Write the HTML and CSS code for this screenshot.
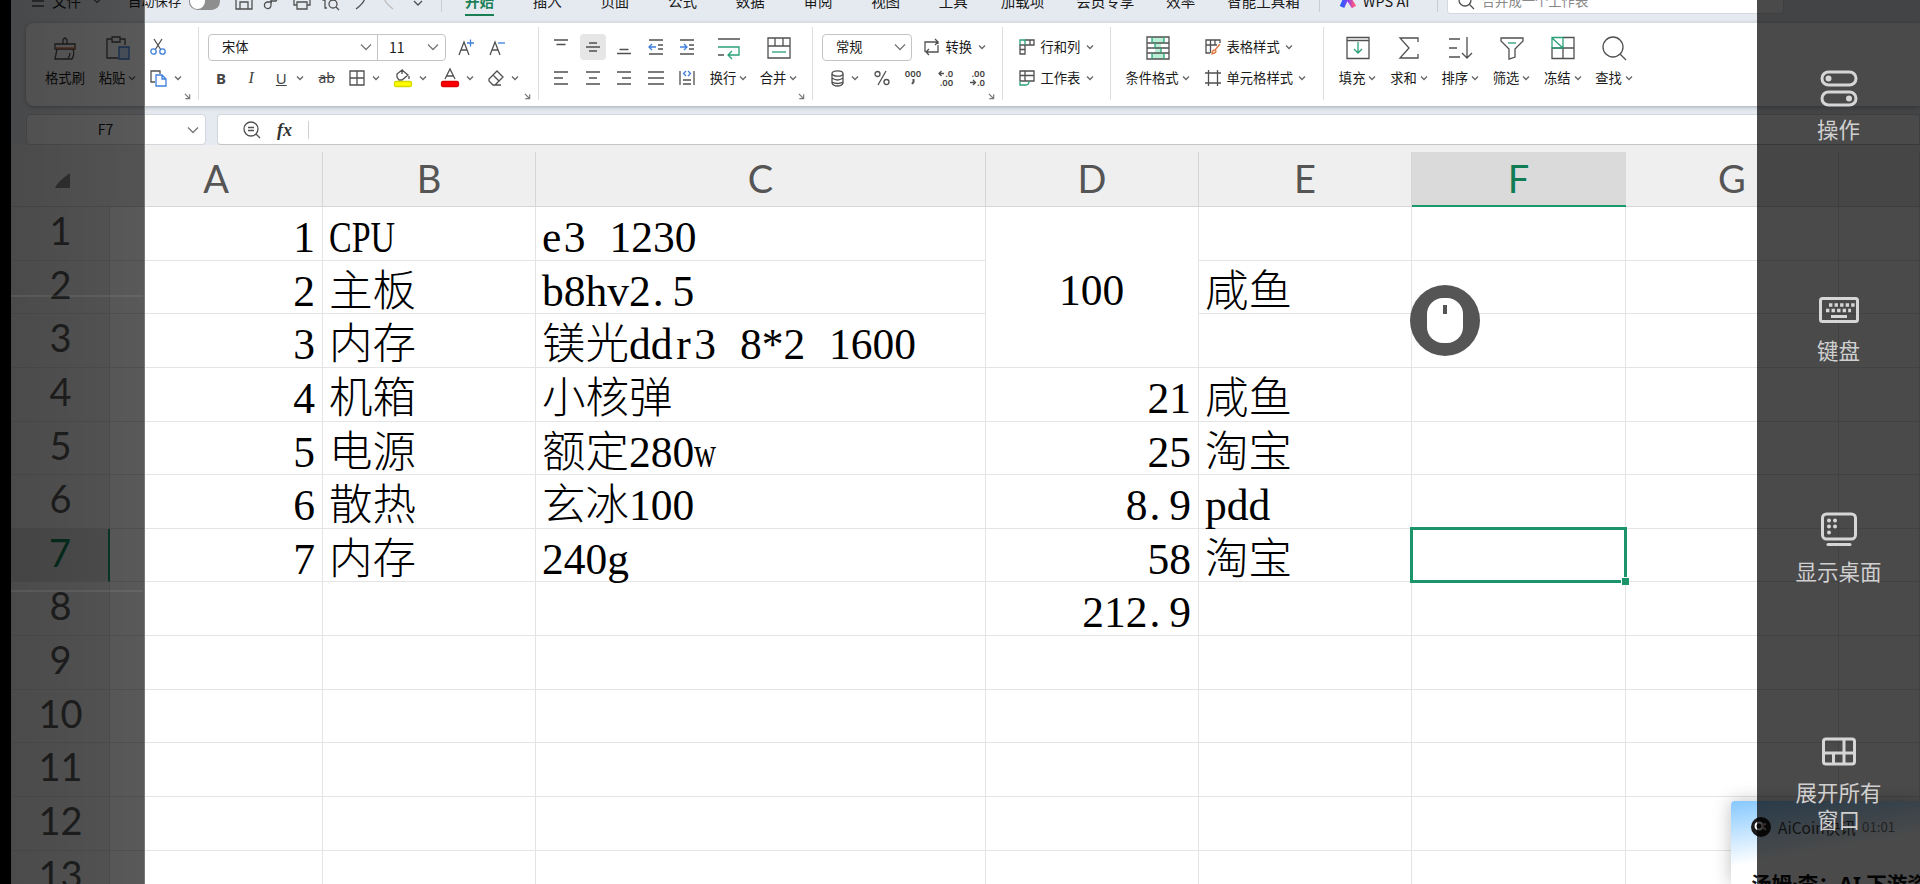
FILE: index.html
```html
<!DOCTYPE html>
<html lang="zh-CN">
<head>
    <meta charset="UTF-8">
    <meta name="viewport" content="width=device-width, initial-scale=1.0">
    <title>WPS 表格</title>
    <link rel="stylesheet" href="styles.css">
</head>
<body>
    <!-- shared icons -->
    <svg class="defs">
        <symbol id="chev" viewBox="0 0 8 8"><path d="M1 2.5 4 5.5 7 2.5"/></symbol>
        <symbol id="chev-big" viewBox="0 0 12 8"><path d="M1 1.5 6 6.5 11 1.5"/></symbol>
        <symbol id="launch" viewBox="0 0 8 8"><path d="M1 1 6 6M6.5 1.5V6.5H1.5"/></symbol>
    </svg>

    <div class="app">
        <div class="menubar">
            <span class="file"><svg width="12" height="14"><path d="M0 1H12M0 7H12M0 12H12"/></svg>文件<svg class="chev"><use href="#chev"/></svg></span>
            <span class="autosave">自动保存<i class="toggle"></i></span>
            <div class="quick">
                <svg width="18" height="18"><path d="M1 1H13L17 5V17H1ZM5 17V10H13V17"/></svg>
                <svg width="18" height="18"><path d="M8 10H4A3.300 3.300 0 1 0 7 13V4A3 3 0 1 1 12 9H7"/></svg>
                <svg width="18" height="18"><path d="M4 6V1H14V6M4 13H1V6H17V13H14M4 10H14V17H4Z"/></svg>
                <svg width="18" height="18"><path d="M5 16H3V8H1V3H14V7"/><circle cx="11" cy="12" r="4"/><path d="M14 15 17 18"/></svg>
                <svg width="18" height="18"><path d="M8 1C15 3 17 8 5 17"/></svg>
                <svg width="18" height="18" class="faint"><path d="M8 1C3 6 3 9 13 17"/></svg>
                <svg width="18" height="18"><path d="M5 9 9 13 13 9"/></svg>
            </div>
            <i class="bar"></i>
            <div class="tabs"><b>开始</b><span>插入</span><span>页面</span><span>公式</span><span>数据</span><span>审阅</span><span>视图</span><span>工具</span></div>
            <div class="tabs wide"><span>加载项</span><span>会员专享</span><span>效率</span><span>智能工具箱</span></div>
            <i class="bar"></i>
            <span class="ai"><svg width="18" height="18" viewBox="0 0 18 18"><defs><linearGradient id="aig"><stop offset="0" stop-color="#2a5cff"/><stop offset=".5" stop-color="#8d3df0"/><stop offset="1" stop-color="#ff5b7d"/></linearGradient></defs><path d="M2 15 7 4 14 15" stroke="url(#aig)" stroke-width="5" stroke-linejoin="round"/></svg>WPS AI</span>
            <i class="bar"></i>
            <div class="search"><svg width="18" height="18"><circle cx="8" cy="8" r="6"/><path d="M12 12 17 17"/></svg>合并成一个工作表</div>
        </div>

        <div class="ribbon">
            <div class="group clip">
                <div class="big w-brush"><svg width="24" height="24"><path d="M10 8V4Q12 0 14 4V8M2 8H22V13H2ZM4 13 2 23H19Q22 18 20 13M15 22Q17 20 17 17"/><path class="orange" d="M2 12H22"/></svg><span>格式刷</span></div>
                <div class="big w-paste"><svg width="24" height="24"><path d="M6 3H1V22H12M14 3H19V9M6 1H14V6H6Z"/><path class="blue tint" d="M13 11H23V23H13Z"/></svg><span>粘贴<svg class="chev"><use href="#chev"/></svg></span></div>
                <div class="rows cutcopy">
                    <div class="row"><svg width="16" height="16"><path d="M4 0 11 11M12 0 5 11"/><g class="blue"><circle cx="3.500" cy="12.500" r="2.700"/><circle cx="12.500" cy="12.500" r="2.700"/></g></svg></div>
                    <div class="row"><span class="pair"><svg width="17" height="17"><path d="M5 12H1V1H10V4"/><path class="blue" d="M6 5H12L16 9V16H6ZM12 5V9H16"/></svg><svg class="chev"><use href="#chev"/></svg></span></div>
                </div>
                <svg class="launch"><use href="#launch"/></svg>
            </div>

            <div class="group font">
                <div class="rows">
                    <div class="row">
                        <div class="combo"><span class="name">宋体<svg class="chevb"><use href="#chev-big"/></svg></span><span class="size">11<svg class="chevb"><use href="#chev-big"/></svg></span></div>
                        <svg class="aplus" width="17" height="17"><path d="M1 16 6 3 11 16M3 11H9"/><path class="blue" d="M9 4H16M12.500 .5V7.500"/></svg>
                        <svg class="aminus" width="17" height="17"><path d="M1 16 6 3 11 16M3 11H9"/><path class="blue" d="M9 4H16"/></svg>
                    </div>
                    <div class="row spread">
                        <span class="ltr bold">B</span>
                        <span class="ltr ital">I</span>
                        <span class="pair"><span class="ltr under">U</span><svg class="chev"><use href="#chev"/></svg></span>
                        <span class="ltr strike">ab</span>
                        <span class="pair"><svg width="16" height="16"><path d="M1 1H15V15H1ZM8 1V15M1 8H15"/></svg><svg class="chev"><use href="#chev"/></svg></span>
                        <span class="pair"><svg width="18" height="18"><path d="M8 1 14 6 8 11H5L3 8V5L8 1V5M15 7V10"/><rect class="yellow" x=".5" y="12.500" width="17" height="5" rx="1.500"/></svg><svg class="chev"><use href="#chev"/></svg></span>
                        <span class="pair"><svg width="18" height="18"><path d="M4 10 9 0 14 10M6 7H12"/><rect class="red" x=".5" y="12.500" width="17" height="5" rx="1.500"/></svg><svg class="chev"><use href="#chev"/></svg></span>
                        <span class="pair"><svg width="16" height="16"><path d="M9 1 15 7 7 15H5L1 11V9ZM5 5 11 11M5 15H13"/></svg><svg class="chev"><use href="#chev"/></svg></span>
                    </div>
                </div>
                <svg class="launch"><use href="#launch"/></svg>
            </div>

            <div class="group align">
                <div class="rows five">
                    <div class="row spread">
                        <svg width="16" height="16"><path d="M1 1H15M3.500 5.500H12.500"/></svg>
                        <span class="on"><svg width="16" height="16"><path d="M4 4H12M1 8H15M4 12H12"/></svg></span>
                        <svg width="16" height="16"><path d="M3.500 10.500H12.500M1 14.500H15"/></svg>
                        <svg width="16" height="16"><path d="M1 1H15M10 6H15M10 10H15M1 15H15"/><path class="blue" d="M1 8H8M4 5 1 8 4 11"/></svg>
                        <svg width="16" height="16"><path d="M1 1H15M10 6H15M10 10H15M1 15H15"/><path class="blue" d="M1 8H8M5 5 8 8 5 11"/></svg>
                    </div>
                    <div class="row spread">
                        <svg width="16" height="16"><path d="M1 2H15M1 8H10M1 14H15"/></svg>
                        <svg width="16" height="16"><path d="M1 2H15M4 8H12M1 14H15"/></svg>
                        <svg width="16" height="16"><path d="M1 2H15M6 8H15M1 14H15"/></svg>
                        <svg width="16" height="16"><path d="M0 2H16M0 8H16M0 14H16"/></svg>
                        <svg width="16" height="16"><path d="M1 1V15M15 1V15M4 10H12M4 14H12"/><path class="blue" d="M7 1 4.500 3.500 7 6M9 1 11.500 3.500 9 6"/></svg>
                    </div>
                </div>
                <div class="big w-wrap"><svg width="24" height="24"><path d="M1 3H23M1 19H7"/><path class="green" d="M1 11H22V19H11M15 15 11 19 15 23"/></svg><span>换行<svg class="chev"><use href="#chev"/></svg></span></div>
                <div class="big w-merge"><svg width="24" height="24"><path d="M1 2H23V22H1ZM1 10H23M8 2V10M16 2V10"/><path class="green" d="M5 16H19"/></svg><span>合并<svg class="chev"><use href="#chev"/></svg></span></div>
                <svg class="launch"><use href="#launch"/></svg>
            </div>

            <div class="group number">
                <div class="rows">
                    <div class="row">
                        <div class="combo short"><span class="name">常规<svg class="chevb"><use href="#chev-big"/></svg></span></div>
                        <span class="item conv"><svg width="17" height="16"><path d="M2 13V3H15V5M12 0 15 3 12 6M15 6V13H3M6 10 3 13 6 16"/></svg>转换<svg class="chev"><use href="#chev"/></svg></span>
                    </div>
                    <div class="row spread">
                        <span class="pair"><svg width="13" height="17"><ellipse cx="6.500" cy="3.500" rx="5.500" ry="2.700"/><path d="M1 4V13Q2 16 6.500 16 11 16 12 13V4M1 8Q6.500 12 12 8M1 12Q6.500 15 12 12"/></svg><svg class="chev"><use href="#chev"/></svg></span>
                        <svg width="16" height="16"><circle cx="3.500" cy="4" r="2.500"/><circle cx="12.500" cy="12" r="2.500"/><path d="M12 1 4 15"/></svg>
                        <span class="tiny mid"><span>000</span><svg width="4" height="8"><path d="M2.500 0V3L1 5"/></svg></span>
                        <span class="tiny"><span><svg width="7" height="7"><path d="M1 3.500H6M3.500 1 1 3.500 3.500 6"/></svg>.0</span><span>.00</span></span>
                        <span class="tiny"><span>.00</span><span><svg width="7" height="7"><path d="M0 3.500H5M3 1 5.500 3.500 3 6"/></svg>.0</span></span>
                    </div>
                </div>
                <svg class="launch"><use href="#launch"/></svg>
            </div>

            <div class="group cells">
                <div class="rows">
                    <div class="row"><span class="item"><svg width="16" height="16"><path d="M6 1H15V6H6M11 1V6M1 6H6V15H1ZM1 10.500H6"/><path class="green" d="M1 6V1H6V6"/></svg>行和列<svg class="chev"><use href="#chev"/></svg></span></div>
                    <div class="row"><span class="item"><svg width="16" height="16"><path d="M1 11V1H15V11H1M1 5.500H15M6 1V11"/><path class="green" d="M1 11V15H7Q10 15 10 11"/></svg>工作表<svg class="chev"><use href="#chev"/></svg></span></div>
                </div>
            </div>

            <div class="group styles">
                <div class="big w-cond"><svg width="24" height="24"><path fill="#b9f0d5" stroke="none" d="M6 1H18V7H15V17H18V23H6V17H9V7H6Z"/><path d="M1 1H23V23H1ZM1 7H23M1 12H23M1 17H23"/><path class="green" d="M6 1V7M18 1V7M6 17V23M18 17V23M9 7V12M15 12V17"/></svg><span>条件格式<svg class="chev"><use href="#chev"/></svg></span></div>
                <div class="rows">
                    <div class="row"><span class="item"><svg width="16" height="16"><path d="M5 14H1V1H15V4M1 6H12M5.500 1V14M10 1V6"/><path class="orange" d="M15 5 10 11M7 15Q7 11 10 11 13 13 7 15Z"/></svg>表格样式<svg class="chev"><use href="#chev"/></svg></span></div>
                    <div class="row"><span class="item"><svg width="16" height="16"><path d="M3.500 0V16M12.500 0V16M0 3H16M0 13H16"/></svg>单元格样式<svg class="chev"><use href="#chev"/></svg></span></div>
                </div>
            </div>

            <div class="group edit">
                <div class="big"><svg width="24" height="24"><path d="M1 1.500H23V22.500H1ZM1 4.500H23"/><path class="green" d="M12 6V17M8 13 12 17 16 13"/></svg><span>填充<svg class="chev"><use href="#chev"/></svg></span></div>
                <div class="big"><svg width="24" height="24"><path d="M21 6V2H3L12 12 3 22H21V18"/></svg><span>求和<svg class="chev"><use href="#chev"/></svg></span></div>
                <div class="big"><svg width="24" height="24"><path d="M1 3H12M1 12H9M1 21H12M19 1V22M14 17 19 22 24 17"/></svg><span>排序<svg class="chev"><use href="#chev"/></svg></span></div>
                <div class="big"><svg width="24" height="24"><path d="M1 2H23V5L15 13V21L9 23V13L1 5Z"/><path class="green" d="M8 7H16"/></svg><span>筛选<svg class="chev"><use href="#chev"/></svg></span></div>
                <div class="big"><svg width="24" height="24"><path d="M12 1.500H23V22.500H1V12H23M12 12V22"/><path class="green" d="M1 12V1.500H12V12M1 12H12M1 2 12 12"/></svg><span>冻结<svg class="chev"><use href="#chev"/></svg></span></div>
                <div class="big"><svg width="24" height="24"><circle cx="11" cy="11" r="10"/><path d="M18 18 24 24"/></svg><span>查找<svg class="chev"><use href="#chev"/></svg></span></div>
            </div>
        </div>

        <div class="formula">
            <div class="namebox"><span>F7</span><svg class="chevb"><use href="#chev-big"/></svg></div>
            <div class="input"><svg width="18" height="18"><circle cx="8" cy="8" r="7"/><path d="M13 13 17 17M5 6.500H11M5 9.500H11"/></svg><span class="fx">fx</span><i></i></div>
        </div>

        <div class="sheet">
            <div class="head corner"><svg width="16" height="16"><path d="M15 0V15H0Q2 9 15 0Z"/></svg></div><div class="head">A</div><div class="head">B</div><div class="head">C</div><div class="head">D</div><div class="head">E</div><div class="head active">F</div><div class="head">G</div><div class="head"></div>

            <div class="num">1</div><div class="r">1</div><div><span class="caps">CPU</span></div><div><i class="e">e</i>3 1230</div><div class="merged">100</div><div></div><div></div><div></div><div></div>
            <div class="num">2</div><div class="r">2</div><div>主板</div><div>b8hv2<i class="dot">.</i>5</div><div>咸鱼</div><div></div><div></div><div></div>
            <div class="num">3</div><div class="r">3</div><div>内存</div><div>镁光dd<i>r</i>3 8<i>*</i>2 1600</div><div></div><div></div><div></div><div></div>
            <div class="num">4</div><div class="r">4</div><div>机箱</div><div>小核弹</div><div class="r">21</div><div>咸鱼</div><div></div><div></div><div></div>
            <div class="num">5</div><div class="r">5</div><div>电源</div><div>额定280<i class="w">w</i></div><div class="r">25</div><div>淘宝</div><div></div><div></div><div></div>
            <div class="num">6</div><div class="r">6</div><div>散热</div><div>玄冰100</div><div class="r">8<i class="dot">.</i>9</div><div>pdd</div><div></div><div></div><div></div>
            <div class="num active">7</div><div class="r">7</div><div>内存</div><div>240g</div><div class="r">58</div><div>淘宝</div><div class="selected"></div><div></div><div></div>
            <div class="num">8</div><div></div><div></div><div></div><div class="r">212<i class="dot">.</i>9</div><div></div><div></div><div></div><div></div>
            <div class="num">9</div><div></div><div></div><div></div><div></div><div></div><div></div><div></div><div></div>
            <div class="num">10</div><div></div><div></div><div></div><div></div><div></div><div></div><div></div><div></div>
            <div class="num">11</div><div></div><div></div><div></div><div></div><div></div><div></div><div></div><div></div>
            <div class="num">12</div><div></div><div></div><div></div><div></div><div></div><div></div><div></div><div></div>
            <div class="num">13</div><div></div><div></div><div></div><div></div><div></div><div></div><div></div><div></div>
        </div>
    </div>

    <!-- news popup -->
    <div class="toast">
        <div class="toast-head"><svg width="20" height="20"><circle cx="10" cy="10" r="10" fill="#1c1a1a" stroke="none"/><circle cx="8" cy="9" r="3.500" stroke="#fff" stroke-width="2"/><path d="M15 7Q11 7 12 10L15 13" stroke="#b99" stroke-width="2"/></svg><span>AiCoin快讯</span><small>01:01</small></div>
        <strong>汤姆·李：AI 下游资</strong>
    </div>

    <div class="shade"></div>

    <div class="mouse"><svg width="36" height="45"><rect width="36" height="45" rx="16" fill="#fff" stroke="none"/><rect x="16" y="7" width="4" height="9" fill="#555" stroke="none"/></svg></div>

    <!-- remote control side bar -->
    <div class="sidebar">
        <div class="tool"><svg width="38" height="36"><rect x="2" y="2" width="34" height="13" rx="6.500"/><rect x="2" y="22" width="34" height="13" rx="6.500"/><circle class="dot" cx="8.500" cy="8.500" r="3"/><circle class="dot" cx="29" cy="28.500" r="3"/></svg><span>操作</span></div>
        <div class="tool"><svg width="40" height="36"><rect x="1.500" y="7.500" width="37" height="23" rx="2"/><path d="M10 14H36M7 19.500H32" stroke-width="3.400" stroke-dasharray="3.400 2.150"/><path d="M12 25.500H28"/></svg><span>键盘</span></div>
        <div class="tool"><svg width="38" height="36"><rect x="2.500" y="2" width="33" height="25" rx="4"/><path d="M8 32.500H30" stroke-linecap="round"/><g class="dot"><circle cx="9" cy="8.500" r="2"/><circle cx="15" cy="8.500" r="2"/><circle cx="9" cy="14.500" r="2"/><circle cx="15" cy="14.500" r="2"/><circle cx="9" cy="20.500" r="2"/></g></svg><span>显示桌面</span></div>
        <div class="tool"><svg width="34" height="36"><rect x="1.500" y="6" width="31" height="25" rx="2.500"/><path d="M22 6V31M1 20H33M11.500 20V31"/></svg><span>展开所有<br>窗口</span></div>
    </div>
</body>
</html>
```
FILE: styles.css
```css
* {
    box-sizing: border-box;
}

body {
    margin: 0;
    width: 1920px;
    height: 884px;
    overflow: hidden;
    position: relative;
    background: #000;
    font-family: "Noto Sans CJK SC", sans-serif;
    font-size: 13.3px;
    line-height: 16px;
    color: #1a1a1a;
}

svg {
    fill: none;
    stroke: #505050;
    stroke-width: 1.3;
    flex: none;
    overflow: visible;
}

i {
    font-style: normal;
}

.defs {
    position: absolute;
    width: 0;
    height: 0;
}

.chev {
    width: 8px;
    height: 8px;
    stroke: #666;
}

.chevb {
    width: 12px;
    height: 8px;
    stroke: #777;
}

.blue { stroke: #3f7fdc; }
.green { stroke: #2aa078; }
.orange { stroke: #e0763c; }
.tint { fill: #cfe1fb; }
.yellow { fill: #ff0; stroke: #d8d800; }
.red { fill: #f00; stroke: #d80000; }
.faint { stroke: #bbb; }

.app {
    margin-left: 11px;
    height: 884px;
    overflow: hidden;
    background: #e5eaf0;
}

/* menu bar, its upper half is off screen */
.menubar {
    display: flex;
    align-items: center;
    height: 28px;
    margin-top: -13px;
    padding-left: 21px;
    font-size: 14.5px;
    white-space: nowrap;
}

.file {
    display: flex;
    align-items: center;
    gap: 8px;
    width: 96px;
}

.file .chev {
    margin-left: 4px;
}

.autosave {
    display: flex;
    align-items: center;
    gap: 8px;
    width: 107px;
    font-size: 13.3px;
}

.toggle {
    width: 31px;
    height: 17px;
    border-radius: 9px;
    background: #8e8e8e;
    padding: 1px;
}

.toggle::before {
    content: "";
    display: block;
    width: 15px;
    height: 15px;
    border-radius: 50%;
    background: #fff;
}

.quick {
    display: flex;
    gap: 11px;
    width: 206px;
}

.bar {
    width: 1px;
    height: 22px;
    background: #c8cdd3;
}

.tabs {
    display: flex;
    gap: 38.7px;
    margin-left: 23px;
}

.tabs b {
    color: #1a7f55;
    position: relative;
}

.tabs b::after {
    content: "";
    position: absolute;
    left: 0;
    right: 0;
    top: 21px;
    height: 2px;
    background: #1a7f55;
}

.tabs.wide {
    gap: 32px;
    margin: 0 19px 0 33px;
}

.ai {
    display: flex;
    align-items: center;
    gap: 5px;
    width: 117px;
    padding-left: 20px;
}

.search {
    display: flex;
    align-items: center;
    gap: 7px;
    width: 337px;
    height: 26px;
    margin-left: 9px;
    padding-left: 9px;
    background: #fff;
    border: 1px solid #d4d9de;
    border-radius: 3px;
    font-size: 13.3px;
    color: #888;
}

/* ribbon */
.ribbon {
    display: flex;
    height: 83px;
    margin: 8px 0 0 15px;
    padding: 4px 0 6px;
    border-radius: 8px 0 0 8px;
    background: #fff;
    box-shadow: 0 1px 4px rgba(60, 70, 80, .4);
    white-space: nowrap;
}

.group {
    position: relative;
    display: flex;
    border-right: 1px solid #ddd;
}

.clip { width: 173px; padding-left: 15px; }
.font { width: 340px; padding-left: 9px; }
.align { width: 274px; padding-left: 14px; }
.number { width: 190px; padding-left: 9px; }
.cells { width: 108px; padding-left: 16px; }
.styles { width: 213px; padding-left: 10px; }
.edit { border: 0; padding-left: 8px; }

.launch {
    position: absolute;
    right: 7px;
    bottom: 0;
    width: 7px;
    height: 7px;
    stroke: #777;
}

.big {
    width: 51.3px;
    display: flex;
    flex-direction: column;
    align-items: center;
    padding-top: 9px;
    gap: 10px;
}

.big span {
    display: flex;
    align-items: center;
    gap: 3px;
}

.w-brush { width: 48px; }
.w-paste { width: 57px; }
.w-wrap { width: 49px; margin-left: 9px; }
.w-merge { width: 49px; margin-left: 1px; }
.w-cond { width: 73px; }

.rows {
    display: flex;
    flex-direction: column;
}

.row {
    display: flex;
    align-items: center;
    height: 26px;
    margin-top: 7px;
}

.row + .row {
    margin-top: 5px;
}

.cutcopy { margin-left: 4px; }

.pair {
    display: flex;
    align-items: center;
    gap: 7px;
}

.spread {
    justify-content: space-between;
}

.font .spread {
    width: 311px;
    padding-left: 5px;
}

.five {
    width: 142px;
}

.on {
    width: 26px;
    height: 26px;
    margin: 0 -5px;
    padding: 5px;
    background: #e6e6e6;
    border-radius: 4px;
}

.number .spread {
    width: 163px;
    padding-left: 9px;
}

.combo {
    display: flex;
    width: 238px;
    height: 27px;
    border: 1px solid #c4c4c4;
    border-radius: 4px;
}

.combo span {
    display: flex;
    align-items: center;
    justify-content: space-between;
    padding: 0 5px 0 13px;
    flex: 1;
}

.combo .size {
    flex: none;
    width: 68px;
    border-left: 1px solid #c4c4c4;
    padding-left: 11px;
    padding-right: 6px;
    font-size: 14px;
}

.combo.short {
    width: 90px;
}

.aplus { margin-left: 12px; }
.aminus { margin-left: 14px; }

.ltr {
    width: 16px;
    text-align: center;
    font: 15px/16px "Noto Sans", sans-serif;
    color: #444;
}

.bold { font-weight: 700; }
.ital { font: italic 16px/16px "Liberation Serif", serif; }
.under { text-decoration: underline; }
.strike { text-decoration: line-through; font-size: 14px; }

.tiny {
    display: flex;
    flex-direction: column;
    align-items: flex-end;
    width: 17px;
    font: 600 9.5px/9px "Noto Sans", sans-serif;
    color: #444;
}

.tiny.mid {
    align-items: center;
    gap: 1px;
}

.tiny.mid svg {
    stroke-width: 2;
}

.item {
    display: flex;
    align-items: center;
    gap: 5.5px;
}

.conv { margin-left: 11px; }
.styles .rows { margin-left: 11px; }

/* formula bar */
.formula {
    display: flex;
    gap: 11px;
    height: 31px;
    margin: 8px 0 0 15px;
}

.namebox {
    width: 180px;
    border: 1px solid #d3d6da;
    border-radius: 4px;
    background: #fff;
    display: flex;
    align-items: center;
    padding-right: 6px;
    font-size: 14px;
}

.namebox span {
    flex: 1;
    text-align: center;
    padding: 0 3px 1px 0;
}

.input {
    flex: 1;
    display: flex;
    align-items: center;
    gap: 16px;
    padding-left: 25px;
    border: 1px solid #d3d6da;
    border-bottom-color: #c4c4c4;
    border-radius: 4px 0 0 4px;
    background: #fff;
}

.input i {
    width: 1px;
    height: 18px;
    background: #d0d0d0;
}

.fx {
    font: italic bold 18px/18px "Liberation Serif", serif;
    color: #333;
}

/* sheet */
.sheet {
    display: grid;
    grid-template-columns: 99px 213px 213px 450px 213px 213px 214px 213px 81px;
    grid-template-rows: 62px;
    grid-auto-rows: 53.65px;
    background: #fff;
}

.sheet > div {
    border-right: 1px solid #e4e4e4;
    border-bottom: 1px solid #e4e4e4;
    padding: 5px 7px 0 6px;
    font: 300 43.5px/50px "Liberation Serif", "Noto Sans CJK SC", serif;
    color: #000;
    white-space: nowrap;
    word-spacing: 13px;
}

.sheet > .r {
    text-align: right;
}

.sheet > .merged {
    grid-row: span 3;
    text-align: center;
    padding-top: 58px;
}

.sheet i {
    display: inline-block;
    width: 21.75px;
    text-align: center;
}

.sheet .e,
.sheet .dot {
    text-align: left;
}

.sheet .dot {
    padding-left: 2px;
}

.sheet .w {
    transform: scaleX(.7);
    transform-origin: left;
}

.caps {
    display: inline-block;
    transform: scaleX(.78);
    transform-origin: left;
}

/* the separators start 7px below the formula bar */
.sheet > .head {
    padding: 6px 1px 0 0;
    text-align: center;
    font: 38px/54px Lato, sans-serif;
    color: #555;
    border-right: 0;
    border-bottom-color: #d6d6d6;
    background: linear-gradient(#d6d6d6, #d6d6d6) right 7px / 1px 100% no-repeat #efefef;
}

.sheet > .head.active {
    background: linear-gradient(#efefef 7px, #dadada 7px);
    color: #107c54;
    border-bottom: 2px solid #1a9a6a;
}

.sheet > .head.corner {
    padding: 28px 0 0 44px;
    text-align: left;
    line-height: 0;
    background: #efefef;
}

.corner svg {
    fill: #888;
    stroke: none;
}

.sheet > .num {
    padding: 0 0 0 1px;
    text-align: center;
    font: 38px/47px Lato, sans-serif;
    color: #555;
    background: #f0f0f0;
    border-color: #ddd;
}

.sheet > .num.active {
    background: #dadada;
    color: #107c54;
    border-right: 2px solid #1a9a6a;
}

.selected {
    position: relative;
}

.selected::before {
    content: "";
    position: absolute;
    inset: -2px;
    border: 3px solid #1a9468;
}

.selected::after {
    content: "";
    position: absolute;
    right: -4px;
    bottom: -4px;
    width: 7px;
    height: 7px;
    background: #1a9468;
    border: solid #fff;
    border-width: 1px 0 0 1px;
}

/* popup */
.toast {
    position: absolute;
    left: 1731px;
    top: 801px;
    width: 189px;
    height: 83px;
    overflow: hidden;
    padding: 16px 0 0 20px;
    border-radius: 4px 0 0 0;
    background: linear-gradient(170deg, #86c8ff, #fff 65px);
    box-shadow: 0 0 18px rgba(0, 0, 0, .25);
    white-space: nowrap;
}

.toast-head {
    display: flex;
    align-items: center;
    font-size: 15.5px;
    line-height: 20px;
    color: #444;
}

.toast-head span {
    width: 84px;
    padding-left: 7px;
}

.toast-head small {
    padding-left: 7px;
    font-size: 13.3px;
    color: #777;
}

.toast strong {
    display: block;
    margin-top: 36px;
    font: bold 20.5px/22px "Noto Sans", "Noto Sans CJK SC", sans-serif;
    color: #111;
}

/* dimmed strip on the left */
.shade {
    position: absolute;
    left: 11px;
    top: 0;
    width: 134px;
    height: 884px;
    border-right: 1px solid #777;
    background:
        linear-gradient(rgba(255, 255, 255, .07), rgba(255, 255, 255, .07)) 0 295px / 132px 2px no-repeat,
        linear-gradient(rgba(255, 255, 255, .07), rgba(255, 255, 255, .07)) 0 590px / 132px 2px no-repeat,
        linear-gradient(90deg, rgba(0, 0, 0, .69), rgba(0, 0, 0, .65));
}

.mouse {
    position: absolute;
    left: 1410px;
    top: 285px;
    width: 70px;
    height: 71px;
    border-radius: 50%;
    background: #555;
    padding: 13px 17px;
}

.sidebar {
    position: absolute;
    left: 1757px;
    top: 0;
    width: 163px;
    height: 884px;
    padding-top: 70px;
    background: rgba(0, 0, 0, .71);
}

.tool {
    height: 221px;
    display: flex;
    flex-direction: column;
    align-items: center;
    gap: 10px;
    font-size: 21.5px;
    line-height: 26.5px;
    text-align: center;
    color: #d0d0d0;
}

.tool:last-child {
    height: 144px;
}

.tool svg {
    stroke: #d6d6d6;
    stroke-width: 3;
}

.tool .dot {
    fill: #d6d6d6;
    stroke: none;
}
```
